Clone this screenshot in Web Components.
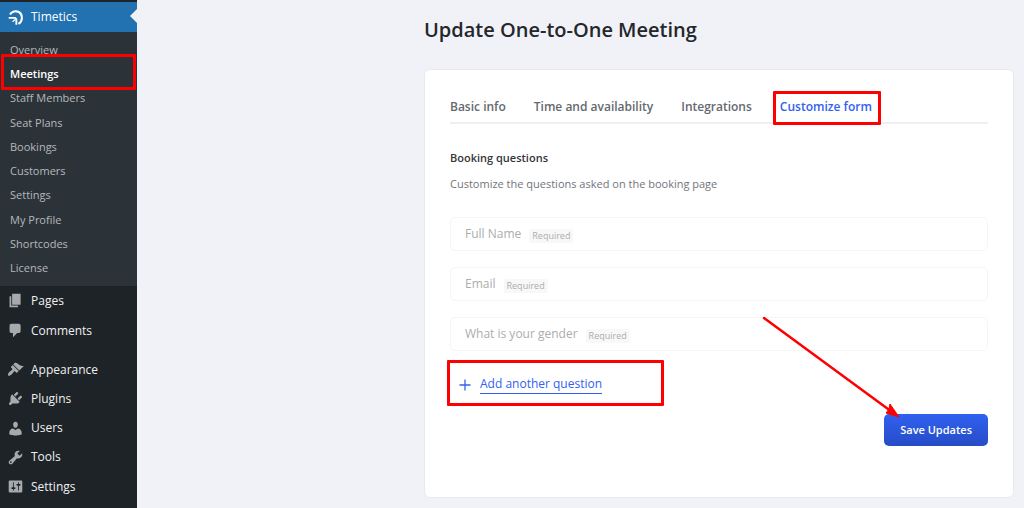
<!DOCTYPE html>
<html lang="en">
<head>
<meta charset="utf-8">
<meta name="viewport" content="width=device-width, initial-scale=1">
<title>Update One-to-One Meeting</title>
<style>
  body { margin: 0; background: #f1f2f7; font-family: "Open Sans", "Noto Sans", sans-serif; font-size: 12px; }
</style>
</head>
<body>
<timetics-app></timetics-app>
<script>
const define = (name, html, setup) => {
  const template = document.createElement('template');
  template.innerHTML = '<style>*{box-sizing:border-box}</style>' + html;
  customElements.define(name, class extends HTMLElement {
    constructor() {
      super();
      this.attachShadow({ mode: 'open' }).append(template.content.cloneNode(true));
    }
    connectedCallback() { if (setup) setup(this, this.shadowRoot); }
  });
};

const icons = {
  timetics: '<path fill="none" stroke="currentColor" stroke-width="2.400" d="M3.500 6.500C6 3 9 2.500 11 2.800C15 3.400 17.500 6.500 17.500 10.500C17.500 13.500 16 16 13.500 17.500"/><path fill="none" stroke="currentColor" stroke-width="2.200" d="M2 10.500H9.500L11 12V18.500"/><path fill="none" stroke="currentColor" stroke-width="1.400" d="M10 12L6.500 15"/>',
  page: '<path d="M6 15V2h10v13H6zm-1 1h8v2H3V5h2v11z"/>',
  comments: '<path d="M5 2h9c1.100 0 2 .9 2 2v7c0 1.100-.9 2-2 2h-2l-5 5v-5H5c-1.100 0-2-.9-2-2V4c0-1.100.9-2 2-2z"/>',
  appearance: '<path d="M14.480 11.060L7.410 3.990l1.500-1.500c.5-.56 2.300-.47 3.510.32 1.210.8 1.430 1.280 2.910 2.100 1.180.64 2.450 1.260 4.450.85zm-.71.71L6.700 4.700 4.930 6.470c-.39.39-.39 1.020 0 1.410l1.060 1.060c.39.39.39 1.030 0 1.420-.6.6-1.430 1.110-2.210 1.690-.35.26-.7.53-1.010.84C1.430 14.230.4 16.080 1.400 17.070c.99 1 2.840-.03 4.180-1.360.31-.31.58-.66.85-1.020.57-.78 1.080-1.610 1.690-2.210.39-.39 1.020-.39 1.410 0l1.060 1.060c.39.39 1.020.39 1.410 0z"/>',
  plugins: '<path d="M13.110 4.360L9.870 7.600 8 5.730l3.240-3.240c.35-.34 1.050-.2 1.560.32.52.51.66 1.210.31 1.550zm-8 1.770l.91-1.120 9.010 9.010-1.190.84c-.71.71-2.630 1.160-3.820 1.160H6.140L4.900 17.260c-.59.59-1.540.59-2.120 0-.59-.58-.59-1.530 0-2.120l1.240-1.240v-3.880c0-1.130.4-3.190 1.090-3.890zm7.260 3.970l3.240-3.240c.34-.35 1.040-.21 1.550.31.52.51.66 1.210.31 1.550l-3.240 3.250z"/>',
  users: '<path d="M10 9.250c-2.270 0-2.730-3.440-2.730-3.440C7 4.020 7.820 2 9.970 2c2.160 0 2.980 2.020 2.710 3.810 0 0-.41 3.440-2.680 3.440zm0 2.570L12.720 10c2.390 0 4.520 2.330 4.520 4.530v2.490s-3.650 1.130-7.240 1.130c-3.650 0-7.240-1.130-7.240-1.130v-2.490c0-2.250 1.940-4.480 4.470-4.480z"/>',
  tools: '<path d="M16.680 9.770c-1.340 1.340-3.300 1.670-4.950.99l-5.410 6.520c-.99.99-2.590.99-3.580 0s-.99-2.590 0-3.570l6.520-5.420c-.68-1.650-.35-3.610.99-4.950 1.280-1.280 3.120-1.620 4.720-1.060l-2.890 2.890 2.820 2.820 2.860-2.870c.53 1.580.18 3.390-1.080 4.650zM3.810 16.210c.4.39 1.040.39 1.430 0 .4-.4.4-1.040 0-1.430-.39-.4-1.030-.4-1.430 0-.39.39-.39 1.030 0 1.430z"/>',
  settings: '<path d="M18 16V4c0-.55-.45-1-1-1H3c-.55 0-1 .45-1 1v12c0 .55.45 1 1 1h14c.55 0 1-.45 1-1zM8 11h1c.55 0 1 .45 1 1s-.45 1-1 1H8v1.500c0 .28-.22.5-.5.5s-.5-.22-.5-.5V13H6c-.55 0-1-.45-1-1s.45-1 1-1h1V5.500c0-.28.22-.5.5-.5s.5.22.5.5V11zm5-2h-1c-.55 0-1-.45-1-1s.45-1 1-1h1V5.500c0-.28.22-.5.5-.5s.5.22.5.5V7h1c.55 0 1 .45 1 1s-.45 1-1 1h-1v5.500c0 .28-.22.5-.5.5s-.5-.22-.5-.5V9z"/>'
};

/* Red outline laid over the thing it points out; the user sets its inset. */
define('mark-box', `
  <style>:host{display:block;position:absolute;border:3px solid #fe0000;border-radius:1px;pointer-events:none}</style>`);

define('menu-item', `
  <style>
    :host{display:block}
    a{display:flex;align-items:center;gap:7px;height:29px;padding-left:7px;color:#f0f0f1;text-decoration:none;font-size:12px;line-height:16px;position:relative}
    svg{width:17px;height:17px;fill:currentColor;color:#a7aaad}
    :host([current]) a{background:#2271b1;color:#fff;height:30px}
    :host([current]) svg{color:#fff}
    :host([current]) a::after{content:"";position:absolute;right:0;top:7px;border:7px solid transparent;border-left:0;border-right-color:#f1f2f7}
  </style>
  <a href="#"><svg viewBox="0 0 20 20" aria-hidden="true"></svg><slot></slot></a>`,
  (el, root) => { root.querySelector('svg').innerHTML = icons[el.getAttribute('icon')]; });

define('sub-item', `
  <style>
    :host{display:block;position:relative}
    a{display:flex;align-items:center;height:24px;padding-left:10px;color:#b4b8bc;text-decoration:none;font-size:11px;line-height:16px}
    :host([current]) a{color:#fff;font-weight:600}
    mark-box{inset:-8px 1px -4px 1px}
  </style>
  <a href="#"><slot></slot></a>`,
  (el, root) => { if (el.hasAttribute('marked')) root.append(document.createElement('mark-box')); });

define('side-menu', `
  <style>
    :host{display:block;background:#1d2327;padding-top:2px}
    .sub{display:flex;flex-direction:column;justify-content:space-between;min-height:254px;padding:6px 0;background:#2c3338}
    .group{display:flex;flex-direction:column;justify-content:space-between;min-height:59px}
    .group + .group{margin-top:10px;min-height:146px}
  </style>
  <nav aria-label="Main menu">
    <menu-item icon="timetics" current>Timetics</menu-item>
    <div class="sub">
      <sub-item>Overview</sub-item>
      <sub-item current marked>Meetings</sub-item>
      <sub-item>Staff Members</sub-item>
      <sub-item>Seat Plans</sub-item>
      <sub-item>Bookings</sub-item>
      <sub-item>Customers</sub-item>
      <sub-item>Settings</sub-item>
      <sub-item>My Profile</sub-item>
      <sub-item>Shortcodes</sub-item>
      <sub-item>License</sub-item>
    </div>
    <div class="group">
      <menu-item icon="page">Pages</menu-item>
      <menu-item icon="comments">Comments</menu-item>
    </div>
    <div class="group">
      <menu-item icon="appearance">Appearance</menu-item>
      <menu-item icon="plugins">Plugins</menu-item>
      <menu-item icon="users">Users</menu-item>
      <menu-item icon="tools">Tools</menu-item>
      <menu-item icon="settings">Settings</menu-item>
    </div>
  </nav>`);

define('form-tabs', `
  <style>
    :host{display:block}
    [role=tablist]{display:flex;gap:28px;border-bottom:2px solid #eeeff0}
    button{position:relative;height:32px;margin-bottom:-2px;padding:0;border:0;border-bottom:2px solid transparent;background:none;color:#646970;font:600 12px/16px "Open Sans","Noto Sans",sans-serif;white-space:nowrap}
    button[aria-selected=true]{color:#3161f1;border-color:#3161f1}
    mark-box{inset:-1px -9px -3px -7px}
  </style>
  <div role="tablist">
    <button role="tab" aria-selected="false">Basic info</button>
    <button role="tab" aria-selected="false">Time and availability</button>
    <button role="tab" aria-selected="false">Integrations</button>
    <button role="tab" aria-selected="true">Customize form<mark-box></mark-box></button>
  </div>`);

define('question-row', `
  <style>
    :host{display:flex;align-items:center;gap:8px;height:34px;padding:0 14px;border:1px solid #f5f5f6;border-radius:5px;color:#acadae;font-size:12px;line-height:16px}
    small{margin-top:3px;padding:0 3px;border-radius:2px;background:#f8f8f8;font-size:9px;line-height:14px}
  </style>
  <slot></slot><small>Required</small>`);

define('add-question', `
  <style>
    :host{display:block;position:relative;width:fit-content}
    button{display:flex;align-items:center;gap:9px;padding:0;border:0;background:none;color:#3161f1;font:500 12px/18px "Open Sans","Noto Sans",sans-serif}
    svg{width:12px;height:12px}
    span{border-bottom:1px solid #3161f1}
    mark-box{width:217px;height:46px;left:-12px;top:-15px}
  </style>
  <button type="button"><svg viewBox="0 0 12 12" aria-hidden="true"><path d="M6 0.500V11.500M0.500 6H11.500" stroke="currentColor" stroke-width="1.300"/></svg><span>Add another question</span></button>
  <mark-box></mark-box>`);

define('save-button', `
  <style>
    :host{display:block;position:relative;width:fit-content}
    button{height:32px;padding:0 16px;border:0;border-radius:5px;background:linear-gradient(#3161f1,#264cc6);color:#fff;font:600 11px/16px "Open Sans","Noto Sans",sans-serif}
    svg{position:absolute;right:88px;bottom:28px;width:140px;height:104px;pointer-events:none}
  </style>
  <button type="submit"><slot></slot></button>
  <svg viewBox="0 0 140 104" aria-hidden="true"><path d="M4 4L128 95" stroke="#fe0000" stroke-width="2.500" stroke-linecap="round"/><path d="M139 103L126 99L129 95L130 90Z" fill="#fe0000" stroke="#fe0000"/></svg>`);

define('meeting-page', `
  <style>
    :host{display:block;padding:18px 10px 10px 287px}
    h1{margin:0 0 27px;color:#24272b;font-size:20px;line-height:24px;font-weight:600}
    .card{padding:22px 25px 51px;border:1px solid #e9eaee;border-radius:6px;background:#fff}
    h2{margin:25px 0 8px;color:#33363a;font-size:11px;line-height:18px;font-weight:600}
    p{margin:0 0 24px;color:#72767b;font-size:11px;line-height:18px}
    .rows{display:grid;gap:16px}
    add-question{margin:24px 0 0 9px}
    save-button{margin:20px 0 0 auto}
  </style>
  <h1>Update One-to-One Meeting</h1>
  <section class="card">
    <form-tabs></form-tabs>
    <h2>Booking questions</h2>
    <p>Customize the questions asked on the booking page</p>
    <div class="rows">
      <question-row>Full Name</question-row>
      <question-row>Email</question-row>
      <question-row>What is your gender</question-row>
    </div>
    <add-question></add-question>
    <save-button>Save Updates</save-button>
  </section>`);

define('timetics-app', `
  <style>
    :host{display:grid;grid-template-columns:137px minmax(0,1fr);min-height:100vh}
  </style>
  <side-menu></side-menu>
  <main><meeting-page></meeting-page></main>`);
</script>
</body>
</html>
